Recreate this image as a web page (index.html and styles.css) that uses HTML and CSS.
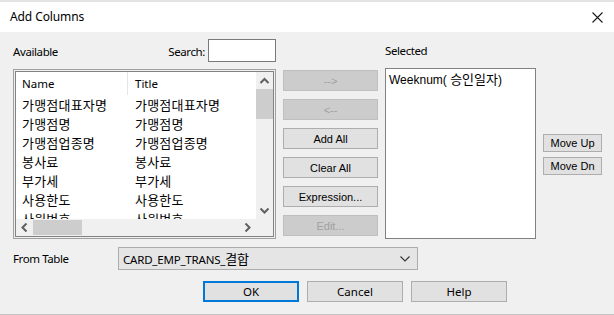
FILE: index.html
```html
<!DOCTYPE html>
<html>
<head>
<meta charset="utf-8">
<link rel="stylesheet" href="styles.css">
</head>
<body>
<div class="window">
  <div class="titlebar">
    <span class="title">Add Columns</span>
    <svg class="close" width="11" height="11" viewBox="0 0 11 11"><path d="M0.5 0.5 L10.5 10.5 M10.5 0.5 L0.5 10.5" stroke="#1a1a1a" stroke-width="1.1" fill="none"/></svg>
  </div>
  <div class="body">
    <div class="main">
      <div class="col-avail">
        <div class="labelrow">
          <span class="lbl">Available</span>
          <span class="search"><span class="lbl">Search:</span><span class="input"></span></span>
        </div>
        <div class="listbox">
          <div class="listinner">
            <div class="view">
              <div class="row head"><span class="c1">Name</span><span class="c2">Title</span></div>
              <div class="row"><span class="c1">가맹점대표자명</span><span class="c2">가맹점대표자명</span></div>
              <div class="row"><span class="c1">가맹점명</span><span class="c2">가맹점명</span></div>
              <div class="row"><span class="c1">가맹점업종명</span><span class="c2">가맹점업종명</span></div>
              <div class="row"><span class="c1">봉사료</span><span class="c2">봉사료</span></div>
              <div class="row"><span class="c1">부가세</span><span class="c2">부가세</span></div>
              <div class="row"><span class="c1">사용한도</span><span class="c2">사용한도</span></div>
              <div class="row"><span class="c1">사원번호</span><span class="c2">사원번호</span></div>
            </div>
            <div class="vscroll">
              <div class="sbtn"><svg width="17" height="17" viewBox="0 0 17 17"><polyline points="4.5,11 8.5,7 12.5,11" stroke="#606060" stroke-width="2" fill="none"/></svg></div>
              <div class="vthumb"></div>
              <div class="vtrack"></div>
              <div class="sbtn"><svg width="17" height="17" viewBox="0 0 17 17"><polyline points="4.5,6.5 8.5,10.5 12.5,6.5" stroke="#606060" stroke-width="2" fill="none"/></svg></div>
            </div>
            <div class="hscroll">
              <div class="sbtn"><svg width="17" height="17" viewBox="0 0 17 17"><polyline points="10.5,4.5 6.5,8.5 10.5,12.5" stroke="#606060" stroke-width="2" fill="none"/></svg></div>
              <div class="hthumb"></div>
              <div class="htrack"></div>
              <div class="sbtn"><svg width="17" height="17" viewBox="0 0 17 17"><polyline points="6.5,4.5 10.5,8.5 6.5,12.5" stroke="#606060" stroke-width="2" fill="none"/></svg></div>
            </div>
            <div class="corner"></div>
          </div>
        </div>
      </div>
      <div class="col-mid">
        <div class="btn dis">--&gt;</div>
        <div class="btn dis">&lt;--</div>
        <div class="btn">Add All</div>
        <div class="btn">Clear All</div>
        <div class="btn">Expression...</div>
        <div class="btn dis">Edit...</div>
      </div>
      <div class="col-sel">
        <div class="labelrow"><span class="lbl">Selected</span></div>
        <div class="sellist"><div class="selitem">Weeknum( <span class="ko">승인일자</span>)</div></div>
      </div>
      <div class="col-right">
        <div class="btn small">Move Up</div>
        <div class="btn small">Move Dn</div>
      </div>
    </div>
    <div class="fromrow">
      <span class="lbl fromlbl">From Table</span>
      <div class="combo">
        <span class="combotext">CARD_EMP_TRANS_<span class="ko">결합</span></span>
        <svg width="10" height="6" viewBox="0 0 10 6"><polyline points="0.5,0.5 5,5 9.5,0.5" stroke="#333" stroke-width="1.1" fill="none"/></svg>
      </div>
    </div>
    <div class="actions">
      <div class="abtn default">OK</div>
      <div class="abtn">Cancel</div>
      <div class="abtn">Help</div>
    </div>
  </div>
</div>
</body>
</html>
```

FILE: styles.css
```css
* { box-sizing: border-box; }
html, body { margin: 0; padding: 0; background: #f0f0f0; }
body {
  font-family: "Noto Sans", "Noto Sans CJK KR", sans-serif;
  font-size: 12px;
  color: #000;
}
.window {
  width: 614px;
  height: 315px;
  display: flex;
  flex-direction: column;
  background: #f0f0f0;
  border-bottom: 1px solid #c4c4c4;
}
.titlebar {
  height: 32px;
  border-top: 2px solid #e3e3e3;
  background: #fff;
  display: flex;
  align-items: center;
  justify-content: space-between;
  padding: 0 11px 1px 10px;
}
.title { font-size: 12px; letter-spacing: -0.1px; }
.close { display: block; margin-top: 1px; }
.body {
  flex: 1;
  padding: 7px 0 0 13px;
  display: flex;
  flex-direction: column;
}
.main { display: flex; gap: 7px; }
.lbl { font-size: 11.5px; letter-spacing: -0.4px; }
.labelrow {
  height: 23px;
  display: flex;
  align-items: center;
  justify-content: space-between;
}
.col-avail { width: 263px; display: flex; flex-direction: column; }
.col-avail .labelrow .lbl { padding-top: 1px; }
.search { display: flex; align-items: center; gap: 3px; }
.input {
  width: 68px;
  height: 23px;
  background: #fff;
  border: 1px solid #7a7a7a;
}
.listbox {
  margin-top: 7px;
  height: 170px;
  border: 1px solid #a0a0a0;
  padding: 1px;
  background: #f0f0f0;
}
.listinner {
  height: 100%;
  border: 1px solid #828282;
  display: grid;
  grid-template-columns: 1fr 17px;
  grid-template-rows: 1fr 17px;
  background: #fff;
}
.view { overflow: hidden; background: #fff; }
.row { display: flex; height: 19px; align-items: center; font-family: "Noto Sans CJK KR", sans-serif; font-size: 13px; letter-spacing: 0.2px; }
.row .c1 { width: 112px; padding-left: 6px; }
.row .c2 { padding-left: 7px; }
.row.head { height: 23px; font-family: "Noto Sans", sans-serif; font-size: 11.5px; letter-spacing: 0; }
.row.head .c1 { border-right: 1px solid #e5e5e5; height: 23px; display: flex; align-items: center; }
.vscroll { background: #f0f0f0; display: flex; flex-direction: column; }
.sbtn { width: 17px; height: 17px; flex: none; }
.sbtn svg { display: block; }
.vthumb { height: 30px; background: #cdcdcd; flex: none; }
.vtrack { flex: 1; }
.hscroll { background: #f0f0f0; display: flex; }
.hthumb { width: 49px; background: #cdcdcd; flex: none; margin: 1px 0; }
.htrack { flex: 1; }
.corner { background: #f0f0f0; }
.col-mid {
  width: 95px;
  padding-top: 31px;
  display: flex;
  flex-direction: column;
  gap: 8px;
}
.btn {
  height: 21px;
  background: #e1e1e1;
  border: 1px solid #adadad;
  display: flex;
  align-items: center;
  justify-content: center;
  font-family: "Liberation Sans", Arial, sans-serif;
  font-size: 11px;
}
.btn.dis { background: #cccccc; border-color: #bfbfbf; color: #a0a0a0; }
.col-sel { width: 151px; display: flex; flex-direction: column; }
.sellist {
  margin-top: 6px;
  height: 171px;
  background: #fff;
  border: 1px solid #828282;
  padding: 3px 3px;
}
.selitem { font-family: "Liberation Sans", "Noto Sans CJK KR", sans-serif; font-size: 12px; line-height: 14px; }
.ko { font-family: "Noto Sans CJK KR", sans-serif; font-size: 13px; }
.col-right {
  width: 59px;
  padding-top: 95px;
  display: flex;
  flex-direction: column;
  gap: 5px;
}
.btn.small { height: 18px; font-size: 11px; }
.fromrow {
  margin-top: 8px;
  display: flex;
  align-items: center;
}
.fromlbl { width: 105px; }
.combo {
  width: 300px;
  height: 23px;
  background: #e5e5e5;
  border: 1px solid #adadad;
  display: flex;
  align-items: center;
  justify-content: space-between;
  padding: 0 7px 0 4px;
}
.combotext { font-family: "Noto Sans", "Noto Sans CJK KR", sans-serif; font-size: 11.5px; letter-spacing: -0.2px; }
.actions {
  margin-top: 11px;
  padding-left: 190px;
  display: flex;
  gap: 8px;
}
.abtn {
  width: 96px;
  height: 21px;
  background: #e1e1e1;
  border: 1px solid #adadad;
  display: flex;
  align-items: center;
  justify-content: center;
  font-size: 11.5px;
}
.abtn.default { border-color: #0078d7; box-shadow: inset 0 0 0 1px #0078d7; }
```
